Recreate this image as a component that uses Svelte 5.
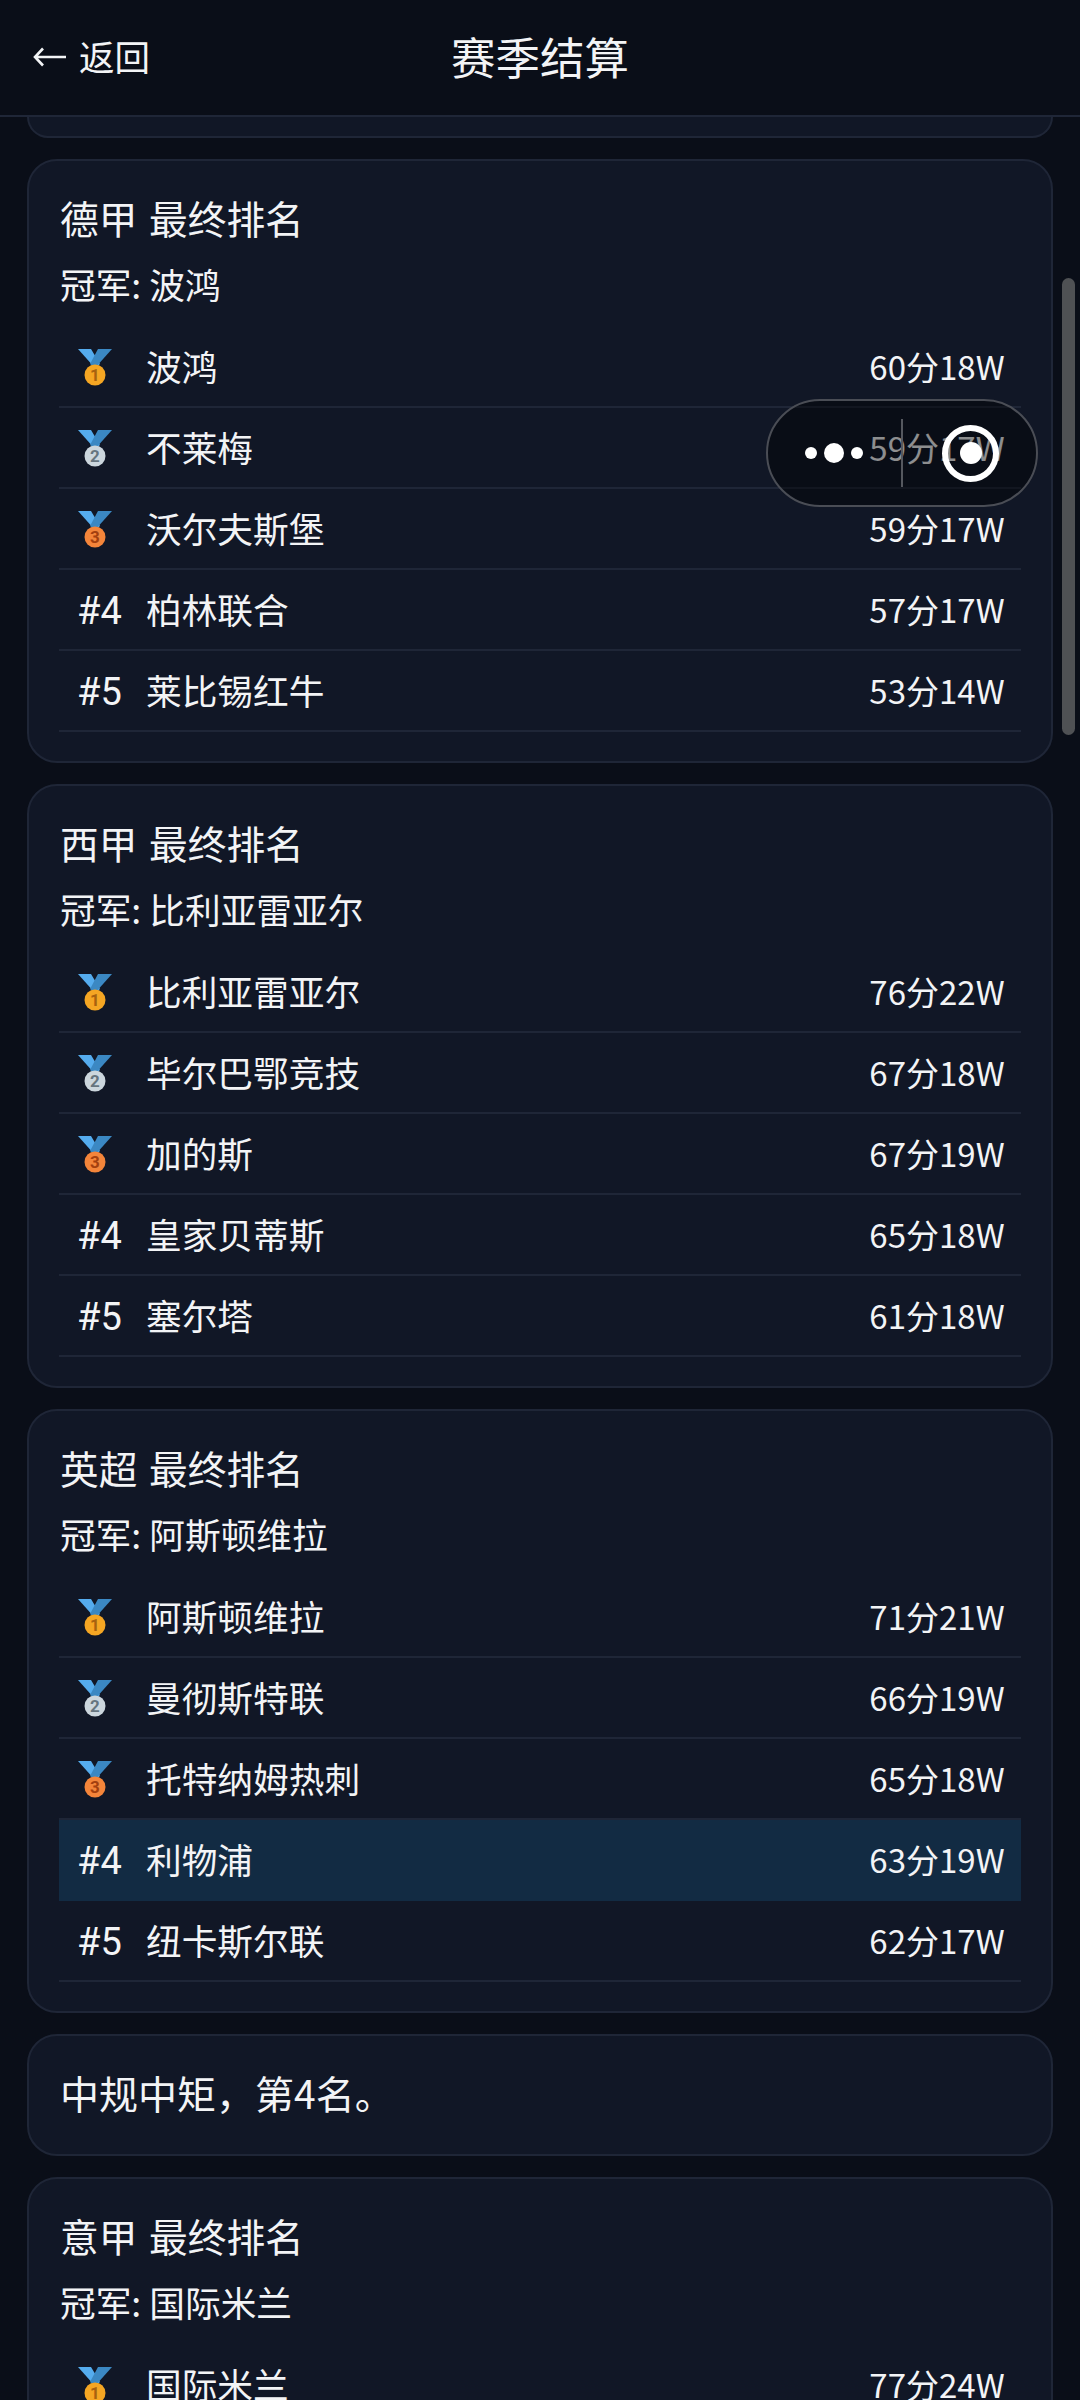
<script>
  const leagues = [
    { name: '德甲', champ: '波鸿', rows: [['波鸿','60分','18W'],['不莱梅','59分','17W'],['沃尔夫斯堡','59分','17W'],['柏林联合','57分','17W'],['莱比锡红牛','53分','14W']] },
    { name: '西甲', champ: '比利亚雷亚尔', rows: [['比利亚雷亚尔','76分','22W'],['毕尔巴鄂竞技','67分','18W'],['加的斯','67分','19W'],['皇家贝蒂斯','65分','18W'],['塞尔塔','61分','18W']] },
    { name: '英超', champ: '阿斯顿维拉', rows: [['阿斯顿维拉','71分','21W'],['曼彻斯特联','66分','19W'],['托特纳姆热刺','65分','18W'],['利物浦','63分','19W',true],['纽卡斯尔联','62分','17W']], note: '中规中矩，第4名。' },
    { name: '意甲', champ: '国际米兰', rows: [['国际米兰','77分','24W']] }
  ];
  const medal = [
    { fill: '#f5a623', text: '#a8620f' },
    { fill: '#ccd6dd', text: '#66757f' },
    { fill: '#f4853a', text: '#a3400f' }
  ];
</script>

<div class="page">
  <header class="bar">
    <div class="back">
      <svg class="arrow" viewBox="0 0 34 24" width="34" height="24"><path d="M33 12H2M10 3.5 2 12l8 8.5" fill="none" stroke="#f3f4f6" stroke-width="2.6"/></svg>
      <span>返回</span>
    </div>
    <h1>赛季结算</h1>
  </header>

  <main class="list">
    <div class="stub"></div>
    {#each leagues as l}
      <section class="card">
        <h2>{l.name} 最终排名</h2>
        <p class="champ">冠军: {l.champ}</p>
        <div class="rows">
          {#each l.rows as r, i}
            <div class="row" class:me={r[3]}>
              <span class="rank">
                {#if i < 3}
                  <svg class="medal" viewBox="0 0 34 37" width="34" height="37">
                    <path d="M0 0H13L22 15 17 19Z" fill="#55acee"/>
                    <path d="M34 0H20L12 15 17 19Z" fill="#3b88c3"/>
                    <circle cx="17" cy="26" r="10.5" fill={medal[i].fill}/>
                    <text x="17" y="32" text-anchor="middle" class="mnum" fill={medal[i].text}>{i + 1}</text>
                  </svg>
                {:else}
                  #{i + 1}
                {/if}
              </span>
              <span class="team">{r[0]}</span>
              <span class="pts">{r[1]}</span>
              <span class="wins">{r[2]}</span>
            </div>
          {/each}
        </div>
      </section>
      {#if l.note}
        <section class="card note">{l.note}</section>
      {/if}
    {/each}
  </main>

  <div class="scroll"></div>

  <div class="pill">
    <div class="dots"><i></i><i class="big"></i><i></i></div>
    <div class="sep"></div>
    <div class="ring"><i></i></div>
  </div>
</div>

<style>
  :global(body) { margin: 0; background: #0a0e18; }
  .page {
    position: relative;
    width: 1080px;
    height: 2400px;
    overflow: hidden;
    background: #0a0e18;
    color: #f3f4f6;
    font-family: "Noto Sans CJK SC", sans-serif;
  }
  .bar {
    height: 115px;
    border-bottom: 2px solid #1f2637;
    position: relative;
    z-index: 1;
    display: flex;
    align-items: center;
    justify-content: center;
    background: #0a0e18;
  }
  .back {
    position: absolute;
    left: 33px;
    top: 34px;
    display: flex;
    align-items: center;
    gap: 12px;
    font-size: 35.5px;
    line-height: 44px;
  }
  .arrow { margin-top: 2px; }
  h1 { margin: 0 0 4px; font-size: 44.5px; font-weight: 400; line-height: 58px; }
  .list { display: flex; flex-direction: column; gap: 21px; padding: 0 27px; }
  .stub {
    height: 19px;
    background: #111726;
    border: 2px solid #1f2637;
    border-top: 0;
    border-radius: 0 0 30px 30px;
  }
  .card {
    background: #111726;
    border: 2px solid #1f2637;
    border-radius: 30px;
    padding: 28px 30px 29px;
  }
  h2 { margin: 0 0 0 1px; font-size: 38.7px; font-weight: 400; line-height: 56px; word-spacing: 3px; }
  .champ { margin: 13px 0 0 1px; font-size: 35.7px; line-height: 52px; }
  .rows { margin-top: 17px; }
  .row {
    height: 79px;
    border-bottom: 2px solid #1f2637;
    display: flex;
    align-items: center;
    padding: 0 18px;
    font-size: 35.7px;
    line-height: 52px;
  }
  .row.me { background: #122b43; border-bottom-color: #122b43; }
  .rank {
    width: 69px;
    flex: none;
    display: flex;
    align-items: center;
    padding-top: 2px;
    font-family: Roboto, sans-serif;
    font-size: 38px;
  }
  .medal { margin-left: 1px; }
  .mnum { font: 700 17px Roboto, sans-serif; }
  .team { flex: 1; padding-bottom: 2px; }
  .pts { font-size: 33px; width: 100px; text-align: right; padding-bottom: 2px; }
  .wins { font-size: 33px; width: 64px; text-align: right; padding-bottom: 2px; }
  .scroll {
    position: absolute;
    right: 5px;
    top: 278px;
    width: 13px;
    height: 457px;
    border-radius: 7px;
    background: #4f5154;
  }
  .pill {
    position: absolute;
    left: 766px;
    top: 399px;
    width: 272px;
    height: 108px;
    box-sizing: border-box;
    border: 2px solid #4a4d55;
    border-radius: 54px;
    background: rgba(0, 0, 0, 0.42);
    display: flex;
    align-items: center;
  }
  .dots { width: 133px; display: flex; align-items: center; gap: 7px; padding-left: 37px; box-sizing: border-box; }
  .dots i { width: 12px; height: 12px; border-radius: 50%; background: #fff; }
  .dots i.big { width: 20px; height: 20px; }
  .sep { width: 2px; height: 68px; background: #55585f; }
  .ring {
    margin-left: 39px;
    width: 57px;
    height: 57px;
    box-sizing: border-box;
    border: 6px solid #fff;
    border-radius: 50%;
    display: flex;
    align-items: center;
    justify-content: center;
  }
  .ring i { width: 22px; height: 22px; border-radius: 50%; background: #fff; }
  .note { padding: 32px 30px 38px 31px; font-size: 39px; line-height: 48px; }
</style>
